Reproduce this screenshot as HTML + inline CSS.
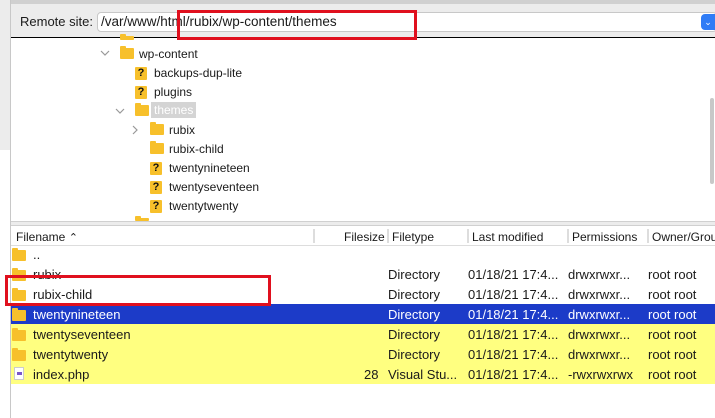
<!DOCTYPE html>
<html><head><style>
body{margin:0;width:715px;height:418px;overflow:hidden;background:#fff;font-family:"Liberation Sans",sans-serif;font-size:12px;color:#1a1a1a;position:relative}
.a{position:absolute;white-space:nowrap}
.fold{position:absolute;width:14px;height:11px;background:#f7c02b;border-radius:1px}
.fold:before{content:"";position:absolute;left:0;top:-2px;width:6px;height:3px;background:#f7c02b;border-radius:1px 1px 0 0}
.q{position:absolute;width:12px;height:13px;background:#f7c02b;font-weight:bold;font-size:11px;text-align:center;line-height:13px;color:#111;border-radius:1px}
.chev{position:absolute}
.row{position:absolute;left:11px;width:704px;height:20px;line-height:21px;font-size:13px}
.row span{position:absolute}
</style></head><body>
<div class="a" style="left:0;top:0;width:10px;height:418px;background:#ececec;border-right:1px solid #c8c8c8"></div>
<div class="a" style="left:0;top:150px;width:10px;height:268px;background:#fff;border-right:1px solid #c8c8c8"></div>
<div class="a" style="left:11px;top:0;width:704px;height:37px;background:#ececec;border-top:4px solid #d0d0d0;box-sizing:border-box"></div>
<div class="a" style="left:20px;top:14px;font-size:13px">Remote site:</div>
<div class="a" style="left:97px;top:12px;width:620px;height:20px;background:#fff;border:1px solid #c8c8c8;border-radius:4px;box-sizing:border-box"></div>
<div class="a" style="left:101px;top:14px;font-size:13.5px">/var/www/html/rubix/wp-content/themes</div>
<div class="a" style="left:701px;top:14px;width:14px;height:16px;background:#2f7cf6;border-radius:4px 0 0 4px;color:#fff;font-size:9px;text-align:center;line-height:16px">&#8964;</div>
<div class="a" style="left:11px;top:37px;width:704px;height:1px;background:#000"></div>
<div class="fold" style="left:120px;top:36px;height:4px"></div>
<svg class="chev" style="left:100px;top:50px" width="10" height="6"><path d="M1 1 L5 5 L9 1" fill="none" stroke="#999" stroke-width="1.2"/></svg>
<div class="fold" style="left:120px;top:48px"></div><div class="a" style="left:139px;top:47px">wp-content</div>
<div class="q" style="left:135px;top:67px">?</div><div class="a" style="left:154px;top:66px">backups-dup-lite</div>
<div class="q" style="left:135px;top:86px">?</div><div class="a" style="left:154px;top:85px">plugins</div>
<svg class="chev" style="left:115px;top:108px" width="10" height="6"><path d="M1 1 L5 5 L9 1" fill="none" stroke="#999" stroke-width="1.2"/></svg>
<div class="fold" style="left:135px;top:105px"></div><div class="a" style="left:151px;top:102px;background:#d4d4d4;color:#fff;padding:1px 3px">themes</div>
<svg class="chev" style="left:132px;top:125px" width="6" height="10"><path d="M1 1 L5 5 L1 9" fill="none" stroke="#999" stroke-width="1.2"/></svg>
<div class="fold" style="left:150px;top:124px"></div><div class="a" style="left:169px;top:123px">rubix</div>
<div class="fold" style="left:150px;top:143px"></div><div class="a" style="left:169px;top:142px">rubix-child</div>
<div class="q" style="left:150px;top:162px">?</div><div class="a" style="left:169px;top:161px">twentynineteen</div>
<div class="q" style="left:150px;top:181px">?</div><div class="a" style="left:169px;top:180px">twentyseventeen</div>
<div class="q" style="left:150px;top:200px">?</div><div class="a" style="left:169px;top:199px">twentytwenty</div>
<div class="fold" style="left:135px;top:218px;height:3px"></div>
<div class="a" style="left:710px;top:98px;width:4px;height:86px;background:#c8c8c8;border-radius:2px"></div>
<div class="a" style="left:11px;top:221px;width:704px;height:5px;background:#ececec;border-top:1px solid #d0d0d0;border-bottom:1px solid #d0d0d0;box-sizing:border-box"></div>
<div class="a" style="left:11px;top:226px;width:704px;height:20px;border-bottom:1px solid #ddd;box-sizing:border-box"></div>
<div class="a" style="left:16px;top:230px">Filename <span style="font-size:11px">&#8963;</span></div>
<div class="a" style="left:313px;top:229px;width:2px;height:14px;background:#ddd"></div>
<div class="a" style="left:344px;top:230px">Filesize</div>
<div class="a" style="left:387px;top:229px;width:2px;height:14px;background:#ddd"></div>
<div class="a" style="left:392px;top:230px">Filetype</div>
<div class="a" style="left:467px;top:229px;width:2px;height:14px;background:#ddd"></div>
<div class="a" style="left:472px;top:230px">Last modified</div>
<div class="a" style="left:567px;top:229px;width:2px;height:14px;background:#ddd"></div>
<div class="a" style="left:572px;top:230px">Permissions</div>
<div class="a" style="left:647px;top:229px;width:2px;height:14px;background:#ddd"></div>
<div class="a" style="left:652px;top:230px">Owner/Group</div>
<div class="row" style="top:244px"><div class="fold" style="left:1px;top:6px"></div><span style="left:22px">..</span></div>
<div class="row" style="top:264px"><div class="fold" style="left:1px;top:6px"></div><span style="left:22px">rubix</span><span style="left:377px">Directory</span><span style="left:457px">01/18/21 17:4...</span><span style="left:557px">drwxrwxr...</span><span style="left:637px">root root</span></div>
<div class="row" style="top:284px"><div class="fold" style="left:1px;top:6px"></div><span style="left:22px">rubix-child</span><span style="left:377px">Directory</span><span style="left:457px">01/18/21 17:4...</span><span style="left:557px">drwxrwxr...</span><span style="left:637px">root root</span></div>
<div class="row" style="top:304px;background:#1c3bc8;color:#fff"><div class="fold" style="left:1px;top:6px"></div><span style="left:22px">twentynineteen</span><span style="left:377px">Directory</span><span style="left:457px">01/18/21 17:4...</span><span style="left:557px">drwxrwxr...</span><span style="left:637px">root root</span></div>
<div class="row" style="top:324px;background:#ffff80"><div class="fold" style="left:1px;top:6px"></div><span style="left:22px">twentyseventeen</span><span style="left:377px">Directory</span><span style="left:457px">01/18/21 17:4...</span><span style="left:557px">drwxrwxr...</span><span style="left:637px">root root</span></div>
<div class="row" style="top:344px;background:#ffff80"><div class="fold" style="left:1px;top:6px"></div><span style="left:22px">twentytwenty</span><span style="left:377px">Directory</span><span style="left:457px">01/18/21 17:4...</span><span style="left:557px">drwxrwxr...</span><span style="left:637px">root root</span></div>
<div class="row" style="top:364px;background:#ffff80"><div style="position:absolute;left:3px;top:3px;width:10px;height:13px;background:#fff;border:1px solid #ccc;box-sizing:border-box"><div style="position:absolute;left:2px;top:4px;width:5px;height:3px;background:#7b57c9"></div></div><span style="left:22px">index.php</span><span style="left:353px">28</span><span style="left:377px">Visual Stu...</span><span style="left:457px">01/18/21 17:4...</span><span style="left:557px">-rwxrwxrwx</span><span style="left:637px">root root</span></div>
<div class="a" style="left:177px;top:10px;width:240px;height:30px;border:3px solid #e0101e;box-sizing:border-box"></div>
<div class="a" style="left:5px;top:275px;width:266px;height:31px;border:3px solid #e0101e;box-sizing:border-box"></div>
</body></html>
